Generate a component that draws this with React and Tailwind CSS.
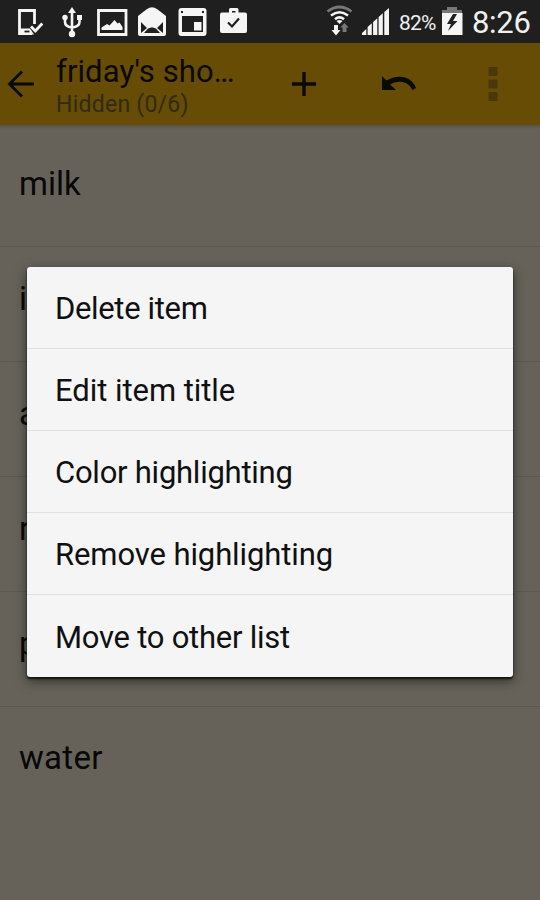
import React from "react";

const items = ["milk", "i", "a", "r", "p", "water"];

const actions = [
  { label: "Delete item", tracking: "tracking-[-0.35px]" },
  { label: "Edit item title", tracking: "tracking-[-0.05px]" },
  { label: "Color highlighting", tracking: "tracking-[-0.25px]" },
  { label: "Remove highlighting", tracking: "tracking-[-0.1px]" },
  { label: "Move to other list", tracking: "tracking-[-0.25px]" },
];

function NotificationIcons() {
  return (
    <svg width="260" height="43" viewBox="0 0 260 43" fill="none" className="shrink-0">
      {/* Phone with check */}
      <path d="M34.5 24V10.5h-15v23h12.500" stroke="#f5f5f5" strokeWidth="2.800" />
      <path d="M20 28.500h10l4 6H20z" fill="#f5f5f5" />
      <path d="M24.500 31.500h5" stroke="#1f1f1f" strokeWidth="1.800" />
      <path d="M31 26.500l4.300 4.500 7-7.500" stroke="#f5f5f5" strokeWidth="2.800" />
      {/* USB */}
      <path d="M72 12v22M65 18v4q0 4.500 7 5.500M79.500 18v4q0 4.500-7.500 5.500" stroke="#f5f5f5" strokeWidth="2.600" />
      <path d="M72 7l4 6h-8z" fill="#f5f5f5" />
      <circle cx="65" cy="17.500" r="2.700" fill="#f5f5f5" />
      <path d="M77 15h5v5h-5z" fill="#f5f5f5" />
      <circle cx="72" cy="34" r="3.200" fill="#f5f5f5" />
      {/* Picture */}
      <path d="M98.500 10.500h27.500v24h-27.500z" stroke="#f5f5f5" strokeWidth="2.800" />
      <path d="M101.500 30v-2.500l5.500-3.500 2.500 1.500 5-5.500 3 3.500 2-1 3 4.500v3z" fill="#f5f5f5" />
      {/* Open mail */}
      <path d="M138 16l9-7q5-3.500 10 0l9 7v18q0 2-2 2h-24q-2 0-2-2z" fill="#f5f5f5" />
      <path d="M141 22l6 6-6 5zM163 22l-6 6 6 5zM144 33l4-4.500 4-1.200 4 1.200 4 4.500z" fill="#1f1f1f" />
      {/* Calendar */}
      <rect x="178.500" y="8" width="28" height="28" rx="3" fill="#f5f5f5" />
      <path d="M182 16h21v16h-21z" fill="#1f1f1f" />
      <path d="M194 22h7.500v8.500h-7.500z" fill="#f5f5f5" />
      <path d="M181 11h2v2h-2zM202 11h2v2h-2z" fill="#1f1f1f" />
      {/* Briefcase */}
      <rect x="220" y="12.500" width="27" height="20.500" rx="2" fill="#f5f5f5" />
      <path d="M230.500 13V9.500h6.500V13" stroke="#f5f5f5" strokeWidth="3" strokeLinejoin="round" />
      <path d="M228 22.500l4 4 7-8" stroke="#1f1f1f" strokeWidth="2.200" />
    </svg>
  );
}

function SignalIcons() {
  return (
    <svg width="66" height="43" viewBox="326 0 66 43" fill="none" className="shrink-0">
      {/* Wi-Fi with traffic arrows */}
      <path d="M327.500 11.500q12-9 24 0" stroke="#777" strokeWidth="2.800" />
      <path d="M331 15.500q8.500-6.500 17 0M335 19.200q4.500-3.500 9 0" stroke="#f5f5f5" strokeWidth="2.600" />
      <path d="M336.500 21q3-2 6 0l-3 3z" fill="#f5f5f5" />
      <path d="M334 25h4v5h2.500l-4.500 5.500-4.500-5.500h2.500z" fill="#f5f5f5" />
      <path d="M342.500 32h4v-4.500h2.200l-4.200-4.500-4.200 4.500h2.200z" fill="#777" />
      {/* Signal bars */}
      <path
        d="M362 35v-2l4.300-4v6zM367.600 35v-8l4.200-3.700V35zM373.100 35V22l4.200-3.700V35zM378.600 35V17l4.200-3.700V35zM384.300 35V12l4.700-4v27z"
        fill="#f5f5f5"
      />
    </svg>
  );
}

function BatteryIcon() {
  return (
    <svg width="22" height="43" viewBox="441 0 22 43" className="shrink-0">
      <path d="M447 7h10v3h5v5h-20v-5h5z" fill="#777" />
      <path d="M442 13h20.500v22H442z" fill="#f5f5f5" />
      <path d="M453 14l-6 10h4l-3 7 9.500-10h-4.500l4-7z" fill="#1f1f1f" />
    </svg>
  );
}

function StatusBar() {
  return (
    <div className="flex h-[43px] items-center bg-[#1f1f1f] text-[#f0f0f0]">
      <NotificationIcons />
      <div className="ml-[66px] flex items-center">
        <SignalIcons />
        <span className="ml-[7px] mt-[5px] w-[42px] whitespace-nowrap text-[21px] tracking-[-0.8px]">82%</span>
        <BatteryIcon />
        <span className="ml-[9px] mt-0.5 whitespace-nowrap text-[31px] leading-[41px] tracking-[-0.3px]">8:26</span>
      </div>
    </div>
  );
}

function ActionBar() {
  return (
    <div className="flex h-[82px] bg-[#664c04]">
      <svg width="40" height="82" viewBox="0 43 40 82" fill="none" stroke="#090906" strokeWidth="2.800" className="shrink-0">
        <path d="M34 84H10M22 71.500L9.500 84 22 96.500" />
      </svg>
      <div className="ml-4 w-[200px] pt-[11px]">
        <div className="whitespace-nowrap text-[31px] leading-[36px] tracking-[0.1px] text-[#0a0904]">
          friday's sho<span className="tracking-[-1.6px]">...</span>
        </div>
        <div className="whitespace-nowrap text-[23px] leading-[29px] tracking-[0.25px] text-[#332a16]">Hidden (0/6)</div>
      </div>
      <svg width="284" height="82" viewBox="256 43 284 82" fill="none" className="shrink-0">
        <path d="M292 84h24M304 72v24" stroke="#090906" strokeWidth="3.400" />
        <path d="M382 76l4.500 4.500q10-6 20-2.500 7 3 9.500 10l-3.500 2q-3-6.500-10-8-7-1-12.500 2.500l6 5.500H382z" fill="#090906" />
        <path d="M488.500 67h9v9h-9zM488.500 79.500h9v9h-9zM488.500 92h9v9h-9z" fill="#4a380a" />
      </svg>
    </div>
  );
}

function App() {
  return (
    <div className="relative h-[900px] w-[540px] overflow-hidden bg-[#66625a] font-['Roboto',sans-serif]">
      <StatusBar />
      <ActionBar />
      <div className="h-1 bg-linear-to-b from-[#57534b] to-[#66625a]" />

      <ul className="-mt-1 pt-[7px]">
        {items.map((item) => (
          <li
            key={item}
            className="flex h-[115px] items-center border-b border-[#5c5850] pb-2.5 pl-[19px] text-[33px] text-[#080806] last:border-0 last:pb-3.5 last:tracking-[0.3px]"
          >
            {item}
          </li>
        ))}
      </ul>

      {/* Context menu */}
      <div className="absolute left-[27px] top-[267px] h-[410px] w-[486px] rounded-[3px] bg-[#f5f5f5] shadow-[0_2px_2px_#11150c,0_4px_12px_rgba(10,20,5,0.6)]">
        {actions.map(({ label, tracking }) => (
          <button
            key={label}
            className="flex h-[82px] w-full items-center border-b border-[#e0e0e0] pl-7 pt-1 text-left text-[31px] text-[#101010] last:border-0"
          >
            <span className={tracking}>{label}</span>
          </button>
        ))}
      </div>
    </div>
  );
}

export default App;
